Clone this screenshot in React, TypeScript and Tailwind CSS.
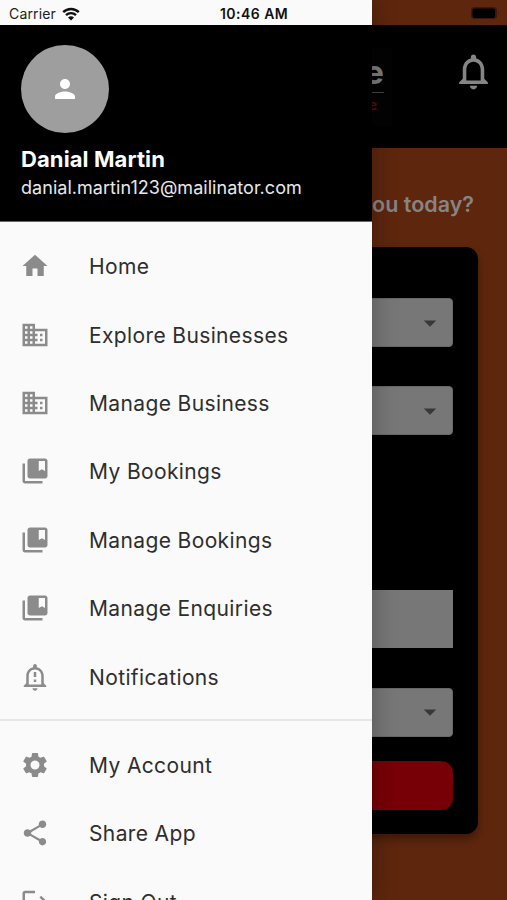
import type { IconType } from "react-icons";
import {
  MdArrowDropDown,
  MdBusiness,
  MdCollectionsBookmark,
  MdHome,
  MdLogout,
  MdNotificationsNone,
  MdOutlineNotificationImportant,
  MdPerson,
  MdSettings,
  MdShare,
} from "react-icons/md";

type MenuItem = { label: string; icon: IconType };

const mainItems: MenuItem[] = [
  { label: "Home", icon: MdHome },
  { label: "Explore Businesses", icon: MdBusiness },
  { label: "Manage Business", icon: MdBusiness },
  { label: "My Bookings", icon: MdCollectionsBookmark },
  { label: "Manage Bookings", icon: MdCollectionsBookmark },
  { label: "Manage Enquiries", icon: MdCollectionsBookmark },
  { label: "Notifications", icon: MdOutlineNotificationImportant },
];

const accountItems: MenuItem[] = [
  { label: "My Account", icon: MdSettings },
  { label: "Share App", icon: MdShare },
  { label: "Sign Out", icon: MdLogout },
];

function MenuRow({ label, icon: Icon }: MenuItem) {
  return (
    <li className="flex h-[68.4px] items-center pl-5">
      <Icon className="size-[30px] shrink-0 text-[#8b8b8b]" />
      <span className="ml-[39px] pt-[1.5px] text-[21px] tracking-[0.37px] whitespace-nowrap text-[#2e2e2e]">
        {label}
      </span>
    </li>
  );
}

function SelectField() {
  return (
    <div className="flex h-[49px] items-center justify-end rounded-[4px] border border-[#676767] bg-[#777777] pr-[7px]">
      <MdArrowDropDown className="size-[30px] text-[#383838]" />
    </div>
  );
}

function WifiIcon() {
  return (
    <svg viewBox="0 0 18 14" className="h-[14px] w-[18px]">
      <path
        d="M1.2 5.1a11.2 11.2 0 0 1 15.6 0M4 8.2a7.1 7.1 0 0 1 10 0"
        fill="none"
        stroke="#111"
        strokeWidth="2.4"
      />
      <path d="M9 13.6 6 10.6a4.3 4.3 0 0 1 6 0z" fill="#111" />
    </svg>
  );
}

function SearchPage() {
  return (
    <div className="flex h-full flex-col bg-[#5e260d]">
      <div className="flex h-[25px] shrink-0 items-center justify-end pr-[7px]">
        <svg viewBox="0 0 30 14" className="h-[14px] w-[30px]">
          <rect x="1" y="1" width="26" height="12" rx="3.5" fill="#3d1808" />
          <rect x="2.5" y="2.5" width="22.5" height="9.5" rx="2" fill="#000" />
          <path d="M28 5q1.5 2 0 4z" fill="#3d1808" />
        </svg>
      </div>
      <header className="flex h-[123px] shrink-0 justify-between bg-black pr-[12px] pl-[306px]">
        <div className="mt-[23px] flex h-[78px] w-[86px] flex-col items-end bg-[#030303] pr-[8px]">
          <span className="mt-[7px] text-[33px] leading-[34px] font-bold text-[#7d7d7d]">
            e
          </span>
          <span className="mt-[3px] h-px w-[70px] bg-[#454545]" />
          <span className="mt-[5px] mr-[7px] text-[13px] leading-[14px] font-medium text-[#75000d]">
            e
          </span>
        </div>
        <MdNotificationsNone className="mt-[25px] size-[43px] text-[#858585]" />
      </header>
      <h1 className="mt-[41px] pr-[33px] text-right text-[21.5px] leading-[30px] font-semibold text-[#858585]">
        you today?
      </h1>
      <main className="mt-[28px] mr-[29px] ml-[29px] flex h-[587px] shrink-0 flex-col rounded-[12px] bg-black px-[25px] pt-[51px] shadow-[0_5px_9px_rgba(0,0,0,0.35)]">
        <SelectField />
        <div className="mt-[39px]">
          <SelectField />
        </div>
        <div className="mt-[155px] h-[58px] bg-[#777777]" />
        <div className="mt-[39.5px]">
          <SelectField />
        </div>
        <button className="mt-[24.5px] h-[49px] rounded-[12px] bg-[#770006]" />
      </main>
    </div>
  );
}

function Drawer() {
  return (
    <aside className="absolute inset-y-0 left-0 flex w-[372.4px] flex-col overflow-hidden bg-[#fafafa] shadow-[0_0_24px_rgba(0,0,0,0.3)]">
      <div className="flex h-[25px] shrink-0 items-center pt-[2px] text-[14px] text-[#222]">
        <span className="ml-[9px] w-[47px] tracking-[0.15px]">Carrier</span>
        <span className="ml-[6px]">
          <WifiIcon />
        </span>
        <span className="ml-[140px] font-semibold tracking-[0.45px] whitespace-nowrap text-[#111]">
          10:46 AM
        </span>
      </div>
      <div className="flex h-[197px] shrink-0 flex-col border-b border-[#666] bg-black pt-[20px] pl-[21px] text-white">
        <div className="flex size-[88px] shrink-0 items-center justify-center rounded-full bg-[#9e9e9e]">
          <MdPerson className="size-[30px]" />
        </div>
        <p className="mt-[12px] text-[22px] leading-[28px] font-bold tracking-[0.1px]">
          Danial Martin
        </p>
        <p className="pt-[1px] text-[18px] leading-[28px] tracking-[0.04px] text-[#e8e8e8]">
          danial.martin123@mailinator.com
        </p>
      </div>
      <ul className="shrink-0 pt-[10px]">
        {mainItems.map((item) => (
          <MenuRow key={item.label} {...item} />
        ))}
      </ul>
      <div className="mt-[8.6px] mb-[9.4px] h-[2px] shrink-0 bg-[#e5e5e5]" />
      <ul className="shrink-0">
        {accountItems.map((item) => (
          <MenuRow key={item.label} {...item} />
        ))}
      </ul>
    </aside>
  );
}

export default function App() {
  return (
    <div className="relative h-[900px] w-[507px] overflow-hidden font-['Inter',sans-serif]">
      <SearchPage />
      <Drawer />
    </div>
  );
}
